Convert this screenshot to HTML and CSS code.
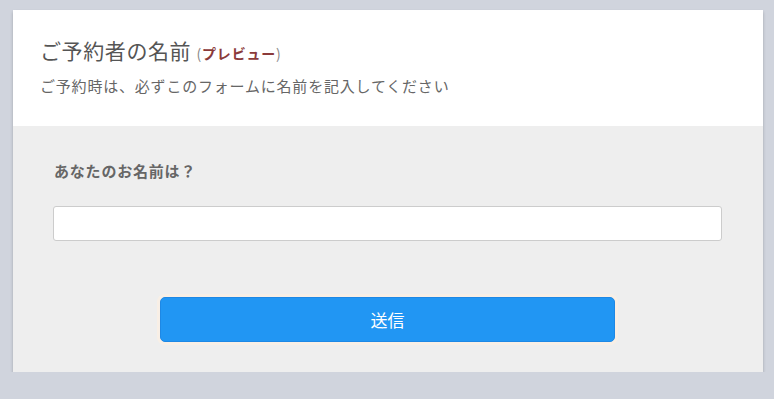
FILE: index.html
```html
<!DOCTYPE html>
<html lang="ja">
<head>
    <meta charset="UTF-8">
    <meta name="viewport" content="width=device-width, initial-scale=1.0">
    <title>ご予約者の名前</title>
    <link rel="stylesheet" href="styles.css">
</head>
<body>
    <div class="card">
        <div class="card-header">
            <h1>ご予約者の名前 <span class="preview">(<b>プレビュー</b>)</span></h1>
            <p>ご予約時は、必ずこのフォームに名前を記入してください</p>
        </div>
        <form class="card-body" onsubmit="return false">
            <label for="name">あなたのお名前は？</label>
            <input type="text" id="name">
            <button type="submit">送信</button>
        </form>
    </div>
</body>
</html>
```

FILE: styles.css
```css
body {
    margin: 0;
    padding: 10px 11px 0 13px;
    background: #d0d4dd;
    font-family: "Noto Sans CJK JP", "Noto Sans", sans-serif;
}

.card {
    background: #eeeeee;
    box-shadow: 0 2px 3px rgba(0, 0, 0, 0.22);
}

.card-header {
    background: #fff;
    padding: 25px 27px 0;
    height: 91px;
}

.card-header h1 {
    margin: 0;
    font-size: 21px;
    font-weight: normal;
    color: #555;
    line-height: 30px;
    letter-spacing: 0.6px;
}

.preview {
    font-size: 14px;
    color: #888;
    letter-spacing: 0.8px;
}

.preview b {
    color: #8b3a3a;
}

.card-header p {
    margin: 8px 0 0;
    font-size: 15px;
    color: #666;
    line-height: 20px;
    letter-spacing: 0.8px;
}

.card-body {
    display: flex;
    flex-direction: column;
    padding: 34px 41px 30px 40px;
    height: 182px;
}

.card-body label {
    font-size: 15px;
    font-weight: bold;
    color: #666;
    line-height: 22px;
    padding-left: 1px;
    letter-spacing: 0.8px;
}

.card-body input {
    margin-top: 24px;
    height: 35px;
    box-sizing: border-box;
    border: 1px solid #ccc;
    border-radius: 3px;
    background: #fff;
}

.card-body button {
    align-self: center;
    margin-top: 56px;
    width: 455px;
    height: 45px;
    border: 1px solid #1e88e5;
    border-radius: 5px;
    background: #2196f3;
    color: #fff;
    font-family: inherit;
    font-size: 17px;
    box-shadow: 0 0 0 3px rgba(255, 240, 225, 0.6);
    cursor: pointer;
}
```
